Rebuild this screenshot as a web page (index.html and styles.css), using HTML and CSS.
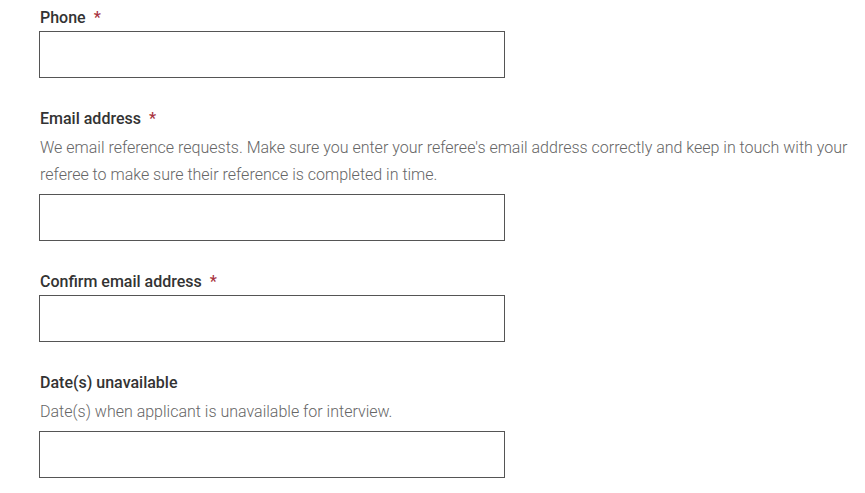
FILE: index.html
```html
<!DOCTYPE html>
<html>
<head>
    <title>Referee details</title>
    <link rel="stylesheet" href="styles.css">
</head>
<body>
    <form class="form">
        <div class="field">
            <label for="phone">Phone <span class="required">*</span></label>
            <input type="text" id="phone">
        </div>

        <div class="field">
            <label for="email">Email address <span class="required">*</span></label>
            <p class="help">We email reference requests. Make sure you enter your referee's email address correctly and keep in touch with your referee to make sure their reference is completed in time.</p>
            <input type="text" id="email">
        </div>

        <div class="field">
            <label for="email-confirm">Confirm email address <span class="required">*</span></label>
            <input type="text" id="email-confirm">
        </div>

        <div class="field">
            <label for="unavailable">Date(s) unavailable</label>
            <p class="help">Date(s) when applicant is unavailable for interview.</p>
            <input type="text" id="unavailable">
        </div>
    </form>
</body>
</html>
```

FILE: styles.css
```css
body {
    font-family: Roboto, "Liberation Sans", Arial, sans-serif;
    background-color: #fff;
    color: #333;
    margin: 0;
}
.form {
    padding: 8px 0 0 39px;
    width: 815px;
}
.field {
    display: flex;
    flex-direction: column;
    align-items: flex-start;
    margin-bottom: 31px;
}
.field label {
    font-size: 16px;
    font-weight: 500;
    line-height: 20px;
    padding-left: 1px;
    margin-bottom: 3px;
}
.required {
    color: #a8343f;
    margin-left: 4px;
}
.help {
    font-size: 16px;
    font-weight: 300;
    line-height: 27px;
    color: #666;
    margin: 2px 0 6px;
    padding-left: 1px;
}
.field input {
    width: 466px;
    height: 47px;
    box-sizing: border-box;
    border: 1px solid #555;
    border-radius: 0;
    padding: 0 10px;
    font-size: 16px;
    font-family: inherit;
    margin: 0;
}
```
